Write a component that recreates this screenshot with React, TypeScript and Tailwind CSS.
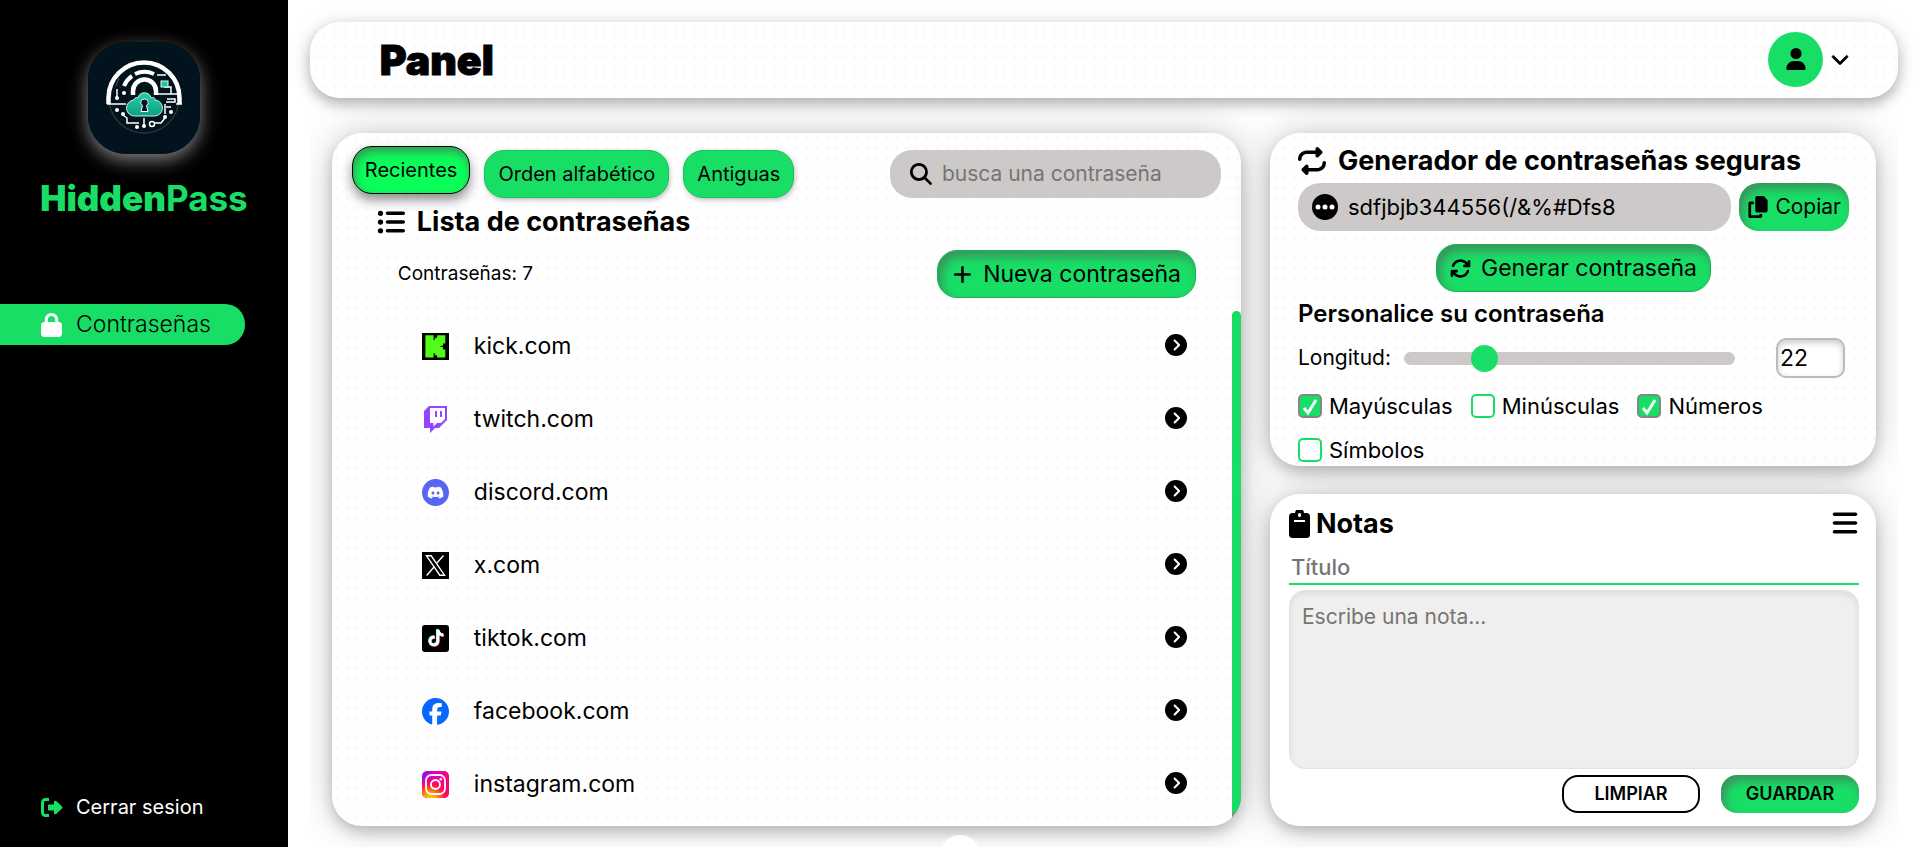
import { useState } from "react";
import type { ReactNode } from "react";
import {
  FaArrowsRotate,
  FaBars,
  FaChevronDown,
  FaCircleChevronRight,
  FaCopy,
  FaDiscord,
  FaFacebook,
  FaListUl,
  FaLock,
  FaMagnifyingGlass,
  FaPlus,
  FaRepeat,
  FaTiktok,
  FaUser,
} from "react-icons/fa6";

const cardShadow = "shadow-[0_6px_14px_rgba(0,0,0,0.2),0_0_40px_rgba(0,0,0,0.2)]";
const headerShadow = "shadow-[0_6px_14px_rgba(0,0,0,0.28),0_0_24px_rgba(0,0,0,0.08)]";
const dots = "bg-white bg-[radial-gradient(circle,#fafafa_2px,transparent_2px)] bg-[size:10px_10px]";
const insetShadow = "shadow-[inset_4px_6px_10px_rgba(85,85,85,0.55)]";

function Logo() {
  return (
    <svg viewBox="0 0 112 112" className="size-28" aria-hidden="true">
      <defs>
        <linearGradient id="cloud" x1="0" y1="0" x2="0" y2="1">
          <stop offset="0" stopColor="#22cfa6" />
          <stop offset="1" stopColor="#0f9f83" />
        </linearGradient>
      </defs>
      <rect width="112" height="112" fill="#02131e" />
      <circle cx="56" cy="56" r="35" fill="none" stroke="#24363d" strokeWidth="1.5" />
      <g fill="none" stroke="#fff">
        <path d="M20.500 62V56a35.500 35.500 0 0 1 71 0v6" strokeWidth="4.500" />
        <path d="M19 62h19M88 62h6" strokeWidth="1.500" />
        <path d="M36 44a23 23 0 0 1 8-10M47 32a23 23 0 0 1 19 0" strokeWidth="4" />
        <path d="M69 33h9M29 47v9" strokeWidth="1.500" />
        <path d="M31 36l-3 8" stroke="#42555b" strokeWidth="1" />
        <path d="M45 53v-4a11.500 11.500 0 0 1 23 0v4" strokeWidth="4.500" />
        <path d="M67 52h25M83 52v-7h-7M77 62v10M78 65h5M78 60h9v-3h-8" strokeWidth="1.500" />
        <path d="M35 73l4 3v5h12M77 76l-4 5h-6M56 76v7" strokeWidth="1.500" />
        <circle cx="64" cy="82" r="2.500" strokeWidth="1.500" />
      </g>
      <g fill="#fff">
        <circle cx="29" cy="56" r="2" />
        <circle cx="36" cy="51" r="2" />
        <circle cx="29" cy="68" r="2" />
        <circle cx="35" cy="72" r="2" />
        <circle cx="49" cy="85" r="2" />
        <circle cx="56" cy="84" r="2" />
        <circle cx="77" cy="75" r="2" />
        <circle cx="83" cy="70" r="2" />
      </g>
      <rect x="73" y="39" width="7" height="6" fill="#16c79c" stroke="#d8fff4" />
      <path
        d="M47 74a7.500 7.500 0 0 1-1-16c1-3 3-3 4-2 1-7 12-7 13 0 2-1 4-1 4 2a8 8 0 0 1-1 16z"
        fill="url(#cloud)"
        stroke="#c9efe5"
      />
      <path d="M56.500 57a3.500 3.500 0 0 0-2 6.500L53 69.500h7l-1.500-6a3.500 3.500 0 0 0-2-6.500z" fill="#03161f" stroke="#fff" />
    </svg>
  );
}

function KickIcon() {
  return (
    <svg viewBox="0 0 27 27" className="size-[27px]" aria-hidden="true">
      <rect width="27" height="27" />
      <path
        transform="translate(2.8 2.9) scale(0.88)"
        d="M1.333 0h8v5.333H12V2.667h2.667V0h8v8H20v2.667h-2.667v2.666H20V16h2.667v8h-8v-2.667H12v-2.666H9.333V24h-8Z"
        fill="#53fc18"
        stroke="#53fc18"
        strokeWidth="1.300"
      />
    </svg>
  );
}

function TwitchIcon() {
  return (
    <svg viewBox="0 0 27 27" className="size-[27px]" aria-hidden="true">
      <path d="M7 0 2 5v17h6v5l5-5h4l8-8V0z" fill="#9146ff" />
      <path d="M8 2h15v11l-4 4h-4l-3.500 3.500V17H8z" fill="#fff" />
      <path d="M13 5h2v6h-2zM18 5h2v6h-2z" fill="#9146ff" />
    </svg>
  );
}

function DiscordIcon() {
  return (
    <span className="flex size-[27px] items-center justify-center rounded-full bg-[#5865f2] text-white">
      <FaDiscord size={17} />
    </span>
  );
}

function XIcon() {
  return (
    <svg viewBox="0 0 27 27" className="size-[27px]" aria-hidden="true">
      <rect width="27" height="27" />
      <g fill="none" stroke="#fff" strokeWidth="1.400">
        <path d="M4.500 3.800h4.700l13.300 19.400h-4.700z" />
        <path d="M21.500 3.500l-7 8M12 15l-7.300 8.500" />
      </g>
    </svg>
  );
}

function TiktokIcon() {
  return (
    <svg viewBox="0 0 27 27" className="size-[27px]" aria-hidden="true">
      <rect width="27" height="27" rx="3" />
      <FaTiktok x="5" y="4" size={17} color="#25f4ee" />
      <FaTiktok x="6" y="5" size={17} color="#fe2c55" />
      <FaTiktok x="5.500" y="4.500" size={17} color="#fff" />
    </svg>
  );
}

function InstagramIcon() {
  return (
    <svg viewBox="0 0 27 27" className="size-[27px]" aria-hidden="true">
      <defs>
        <linearGradient id="ig-base" x1="0" y1="0" x2="1" y2="0.400">
          <stop offset="0" stopColor="#8a10f5" />
          <stop offset="0.500" stopColor="#e800b8" />
          <stop offset="1" stopColor="#ff0169" />
        </linearGradient>
        <radialGradient id="ig-glow" cx="0.300" cy="1.050" r="0.850">
          <stop offset="0" stopColor="#ffd600" />
          <stop offset="0.300" stopColor="#ff9a00" />
          <stop offset="0.650" stopColor="#ff1050" />
          <stop offset="1" stopColor="#ff0169" stopOpacity="0" />
        </radialGradient>
      </defs>
      <rect width="27" height="27" rx="5" fill="url(#ig-base)" />
      <rect width="27" height="27" rx="5" fill="url(#ig-glow)" />
      <g fill="none" stroke="#fff" strokeWidth="1.800">
        <rect x="4" y="4" width="19" height="19" rx="5.500" />
        <circle cx="13.500" cy="13.500" r="4.500" />
      </g>
      <circle cx="18.800" cy="8.300" r="1.300" fill="#fff" />
    </svg>
  );
}

function LogoutIcon() {
  return (
    <svg viewBox="0 0 22 19" className="h-[19px] w-[22px] text-[#19de66]" aria-hidden="true">
      <path d="M8 1.500H4.500a3 3 0 0 0-3 3v10a3 3 0 0 0 3 3H8" fill="none" stroke="currentColor" strokeWidth="3" />
      <path
        d="M8 6.500h5V4c0-1.300 1.300-1.800 2.200-.9l5.800 5.500c.6.500.6 1.300 0 1.800l-5.800 5.500c-.9.900-2.200.4-2.200-.9v-2.500H8a1 1 0 0 1-1-1v-4a1 1 0 0 1 1-1z"
        fill="currentColor"
      />
    </svg>
  );
}

function DotsIcon() {
  return (
    <svg viewBox="0 0 26 26" className="size-[26px] shrink-0" aria-hidden="true">
      <circle cx="13" cy="13" r="13" />
      <g fill="#fff">
        <circle cx="6" cy="13" r="2.500" />
        <circle cx="13" cy="13" r="2.500" />
        <circle cx="20" cy="13" r="2.500" />
      </g>
    </svg>
  );
}

function ClipboardIcon() {
  return (
    <svg viewBox="0 0 21 28" className="h-7 w-[21px]" aria-hidden="true">
      <path
        d="M3.500 3H6a4.500 4.500 0 0 1 9 0h2.500A3.500 3.500 0 0 1 21 6.500v18a3.500 3.500 0 0 1-3.500 3.500h-14A3.500 3.500 0 0 1 0 24.500v-18A3.500 3.500 0 0 1 3.500 3z"
      />
      <rect x="9" y="3" width="3" height="4" rx="1.500" fill="#fff" />
      <rect x="5" y="10" width="11" height="2" fill="#fff" />
    </svg>
  );
}

const sites: { name: string; icon: ReactNode }[] = [
  { name: "kick.com", icon: <KickIcon /> },
  { name: "twitch.com", icon: <TwitchIcon /> },
  { name: "discord.com", icon: <DiscordIcon /> },
  { name: "x.com", icon: <XIcon /> },
  { name: "tiktok.com", icon: <TiktokIcon /> },
  { name: "facebook.com", icon: <FaFacebook size={27} color="#0866ff" /> },
  { name: "instagram.com", icon: <InstagramIcon /> },
];

function Sidebar() {
  return (
    <aside className="flex w-[15%] shrink-0 flex-col bg-black">
      <div className="mt-[42px] self-center overflow-hidden rounded-[38px] shadow-[0_6px_18px_rgba(255,255,255,0.5)]">
        <Logo />
      </div>
      <p className="mt-6 text-center text-[35px] leading-[40px] font-black text-[#19de66]">
        Hidden<span className="font-bold">Pass</span>
      </p>
      <nav className="mt-[86px]">
        <a href="#contrasenas" className="flex h-[41px] w-[85%] items-center gap-3.5 rounded-r-[20px] bg-[#19de66] pl-[41px] text-[23px] font-light text-black">
          <FaLock size={24} color="#fff" className="w-[21px]" />
          Contraseñas
        </a>
      </nav>
      <a href="#salir" className="mt-auto mb-[26px] flex items-center gap-[13px] pl-[41px] text-xl leading-7 text-white">
        <LogoutIcon />
        Cerrar sesion
      </a>
    </aside>
  );
}

function Header() {
  return (
    <header className={`flex h-[76px] shrink-0 items-center justify-between rounded-[30px] pr-[49px] pl-[70px] ${dots} ${headerShadow}`}>
      <h1 className="text-[41px] leading-none font-black [-webkit-text-stroke:1px_black]">Panel</h1>
      <button type="button" aria-label="Cuenta" className="flex items-center gap-2 pb-0.5">
        <span className="flex size-[55px] items-center justify-center rounded-full bg-[#19de66]">
          <FaUser size={22} />
        </span>
        <FaChevronDown size={18} stroke="currentColor" strokeWidth={24} />
      </button>
    </header>
  );
}

const tabs = ["Recientes", "Orden alfabético", "Antiguas"];

function PasswordList() {
  const [tab, setTab] = useState(0);
  return (
    <section className={`flex min-h-0 flex-col overflow-hidden rounded-[30px] ${dots} ${cardShadow}`}>
      <div className="flex items-start justify-between pt-[17px] pr-5 pl-5">
        <div className="flex gap-3.5">
          {tabs.map((label, i) => (
            <button
              key={label}
              type="button"
              onClick={() => setTab(i)}
              className={
                i === tab
                  ? "mt-[-4px] h-12 rounded-[20px] border border-black bg-[#0bff59] px-3 text-xl shadow-[0_6px_12px_rgba(0,0,0,0.45),inset_2px_5px_10px_rgba(85,85,85,0.6)]"
                  : "h-12 rounded-[20px] border border-[#17c25a] bg-[#19de66] px-[13px] text-xl shadow-[1px_2px_5px_rgba(0,0,0,0.25)]"
              }
            >
              {label}
            </button>
          ))}
        </div>
        <label className="flex h-12 w-[331px] items-center gap-2.5 rounded-[22px] bg-[#cdc9c8] pr-4 pl-5">
          <FaMagnifyingGlass size={22} className="shrink-0" />
          <input aria-label="Buscar" placeholder="busca una contraseña" className="w-full bg-transparent text-[21px] outline-none placeholder:text-[#757575]" />
        </label>
      </div>
      <h2 className="mt-2 flex items-center gap-3 pl-[45px] text-[27px] leading-8 font-bold">
        <FaListUl size={28} />
        Lista de contraseñas
      </h2>
      <div className="mt-3 flex items-center justify-between pr-[45px] pl-[66px]">
        <p className="text-[19px]">Contraseñas: 7</p>
        <button type="button" className={`flex h-12 items-center gap-2.5 rounded-[20px] border border-[#17b355] bg-[#19de66] px-3.5 text-[23px] ${insetShadow}`}>
          <FaPlus size={21} />
          Nueva contraseña
        </button>
      </div>
      <div className="mt-[13px] flex min-h-0 flex-1">
        <ul className="-mt-px flex-1 overflow-hidden">
          {sites.map((site) => (
            <li key={site.name} className="flex h-[73px] items-center pr-[45px] pl-[90px]">
              {site.icon}
              <span className="ml-[25px] flex-1 text-[23px]">{site.name}</span>
              <button type="button" aria-label={`Ver ${site.name}`} className="pb-1">
                <FaCircleChevronRight size={22} />
              </button>
            </li>
          ))}
        </ul>
        <div className="w-[9px] bg-gradient-to-b from-transparent from-90% to-[#888] to-90% pb-3" aria-hidden="true">
          <div className="h-full rounded-full bg-[#19de66]" />
        </div>
      </div>
    </section>
  );
}

function CheckOption({ label, initial }: { label: string; initial: boolean }) {
  const [checked, setChecked] = useState(initial);
  return (
    <label className="flex items-center gap-[7px] text-[22px] leading-7">
      <span className="relative flex size-6">
        <input
          type="checkbox"
          checked={checked}
          onChange={() => setChecked(!checked)}
          className="size-6 appearance-none rounded-[5px] border-2 border-[#19de66] bg-white checked:border-[#7f8a83] checked:bg-[#19de66]"
        />
        {checked && (
          <svg viewBox="0 0 24 24" className="pointer-events-none absolute inset-0 size-6" aria-hidden="true">
            <path d="M6 14l4 5 8-13" fill="none" stroke="#fff" strokeWidth="3" />
          </svg>
        )}
      </span>
      {label}
    </label>
  );
}

function Generator() {
  const [length, setLength] = useState(22);
  return (
    <section className={`flex min-h-0 flex-col overflow-hidden rounded-[30px] pr-[27px] pl-7 ${dots} ${cardShadow}`}>
      <h2 className="mt-3 flex items-center gap-3 text-[27px] leading-8 font-bold whitespace-nowrap">
        <FaRepeat size={28} />
        Generador de contraseñas seguras
      </h2>
      <div className="mt-1.5 flex shrink-0 gap-2">
        <label className="flex h-12 min-w-0 flex-1 items-center gap-2.5 rounded-[22px] bg-[#cdc9c8] px-3.5">
          <DotsIcon />
          <input aria-label="Contraseña generada" defaultValue="sdfjbjb344556(/&%#Dfs8" className="w-full min-w-0 bg-transparent text-[22px] outline-none" />
        </label>
        <button type="button" className={`flex h-12 items-center gap-1.5 rounded-[20px] bg-[#19de66] px-2 text-[21px] ${insetShadow}`}>
          <FaCopy size={22} />
          Copiar
        </button>
      </div>
      <button type="button" className={`mt-[13px] flex h-12 shrink-0 items-center gap-2.5 self-center rounded-[20px] border border-[#17b355] bg-[#19de66] px-[13px] text-[23px] ${insetShadow}`}>
        <FaArrowsRotate size={21} />
        Generar contraseña
      </button>
      <h3 className="mt-1.5 text-2xl leading-8 font-semibold">Personalice su contraseña</h3>
      <div className="mt-2 flex items-center text-[21px]">
        <label htmlFor="longitud">Longitud:</label>
        <input
          id="longitud"
          type="range"
          min={0}
          max={100}
          value={length}
          onChange={(e) => setLength(Number(e.target.value))}
          className="ml-[13px] h-[13px] min-w-0 flex-1 appearance-none rounded-full bg-[#cdc9c8] [&::-webkit-slider-thumb]:size-[27px] [&::-webkit-slider-thumb]:appearance-none [&::-webkit-slider-thumb]:rounded-full [&::-webkit-slider-thumb]:bg-[#19de66]"
        />
        <input
          aria-label="Longitud en caracteres"
          value={length}
          onChange={(e) => setLength(Number(e.target.value) || 0)}
          className="mr-1 ml-[41px] h-10 w-[69px] rounded-[10px] border-2 border-[#bbb] bg-white px-0.5 text-[23px] shadow-[inset_0_3px_6px_rgba(0,0,0,0.2)]"
        />
      </div>
      <div className="mt-3.5 flex flex-wrap gap-x-[18px] gap-y-4">
        <CheckOption label="Mayúsculas" initial={true} />
        <CheckOption label="Minúsculas" initial={false} />
        <CheckOption label="Números" initial={true} />
        <CheckOption label="Símbolos" initial={false} />
      </div>
    </section>
  );
}

function Notes() {
  return (
    <section className={`flex min-h-0 flex-col rounded-[30px] bg-white pr-[17px] pb-[13px] pl-[19px] ${cardShadow}`}>
      <div className="mt-3.5 flex items-center justify-between">
        <h2 className="flex items-center gap-1.5 text-[27px] leading-8 font-bold">
          <ClipboardIcon />
          Notas
        </h2>
        <button type="button" aria-label="Menú de notas" className="pb-0.5">
          <FaBars size={28} />
        </button>
      </div>
      <input aria-label="Título" placeholder="Título" className="mt-[11px] h-[34px] border-b-2 border-[#19de66] bg-transparent px-0.5 text-[22px] font-medium outline-none placeholder:text-[#757575]" />
      <textarea
        aria-label="Nota"
        placeholder="Escribe una nota..."
        className="mt-[5px] min-h-0 flex-1 resize-none rounded-[16px] border border-[#e4e2e2] bg-[#f0efed] px-3 py-2.5 text-[21px] outline-none placeholder:text-[#757575] shadow-[inset_0_3px_6px_rgba(0,0,0,0.08)]"
      />
      <div className="mt-1.5 flex justify-end gap-[21px] text-lg font-semibold">
        <button type="button" className="h-[38px] w-[138px] rounded-[16px] border-2 border-black bg-white">LIMPIAR</button>
        <button type="button" className={`h-[38px] w-[138px] rounded-[16px] bg-[#19de66] ${insetShadow}`}>GUARDAR</button>
      </div>
    </section>
  );
}

export default function App() {
  return (
    <div className="relative flex h-screen overflow-hidden bg-white font-['Inter',sans-serif] text-black">
      <Sidebar />
      <main className="flex min-w-0 flex-1 flex-col pt-[22px] pr-[21px] pb-[21px] pl-[22px]">
        <Header />
        <div className="mt-[35px] grid min-h-0 flex-1 grid-cols-[3fr_2fr] gap-[29px] overflow-x-clip px-[22px]">
          <PasswordList />
          <div className="grid min-h-0 grid-rows-[1fr_1fr] gap-7">
            <Generator />
            <Notes />
          </div>
        </div>
      </main>
      <div className="absolute -bottom-[30px] left-1/2 size-[42px] -translate-x-1/2 rounded-full bg-white" aria-hidden="true" />
    </div>
  );
}
